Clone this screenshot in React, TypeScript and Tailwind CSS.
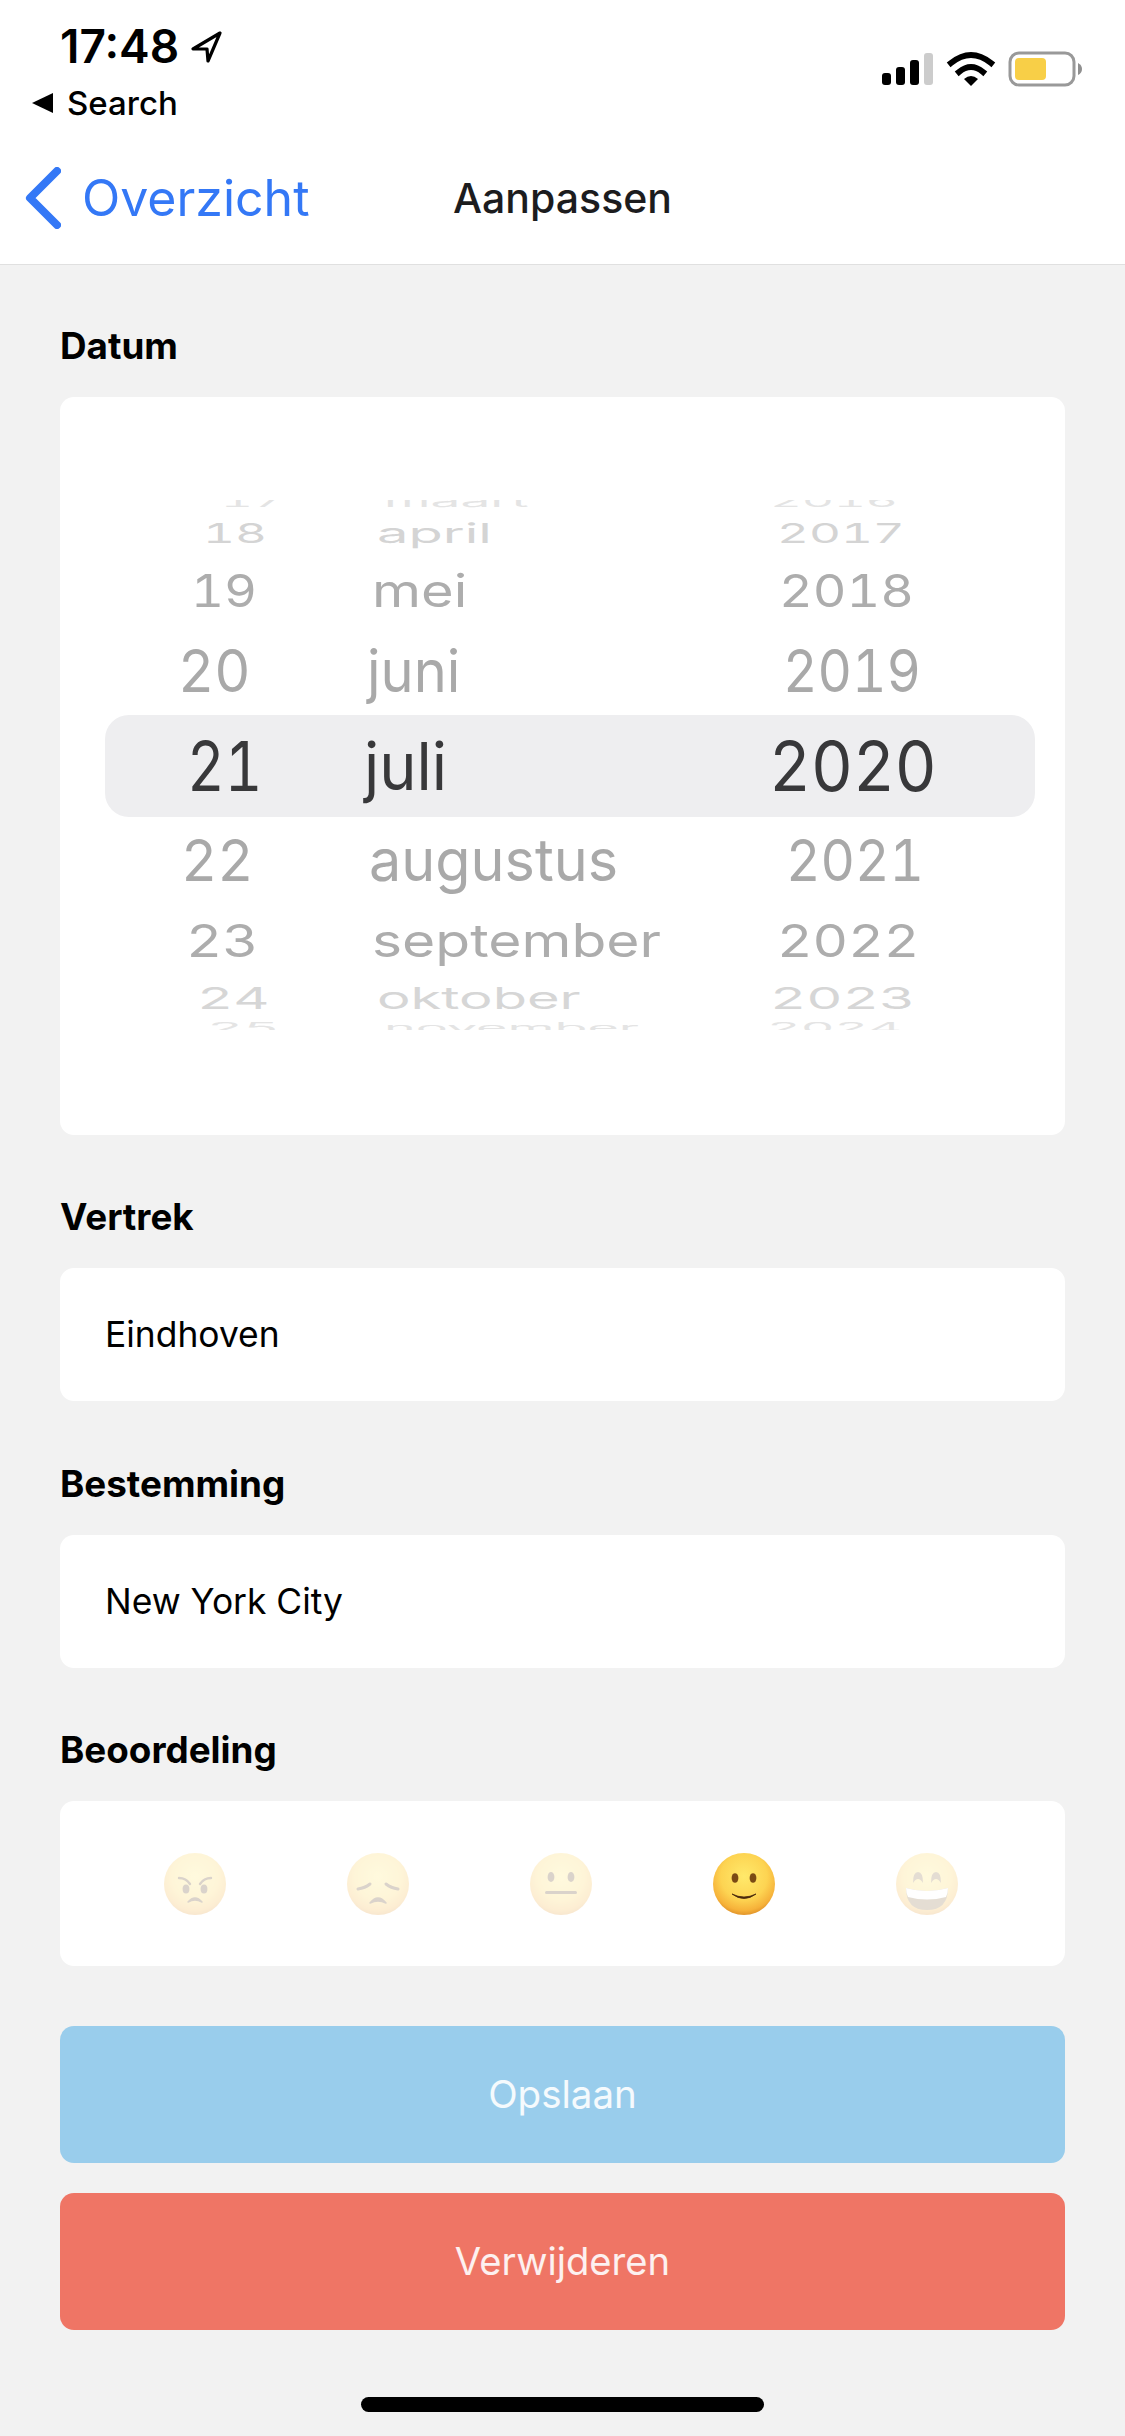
const pickerRows = [
  { day: '17', month: 'maart', year: '2016', row: 'h-[22px] -mt-[10px]', size: 'text-[56px]', monthSize: 'text-[56px]', tone: 'scale-y-[0.3] text-[#e4e4e4]', dayX: 'ml-[116px] scale-x-[0.88]', monthX: 'ml-[24px] scale-x-[0.95]', yearX: 'ml-[20px] scale-x-[0.88]' },
  { day: '18', month: 'april', year: '2017', row: 'h-[42px]', size: 'text-[56px]', monthSize: 'text-[56px]', tone: 'scale-y-[0.49] text-[#d4d4d4]', dayX: 'ml-[98px] scale-x-[0.88]', monthX: 'ml-[17px]', yearX: 'ml-[27px] scale-x-[0.88]' },
  { day: '19', month: 'mei', year: '2018', row: 'h-[73px]', size: 'text-[56px]', monthSize: 'text-[56px]', tone: 'scale-y-[0.81] text-[#adadad]', dayX: 'ml-[86px] scale-x-[0.91]', monthX: 'ml-[12px]', yearX: 'ml-[29px] scale-x-[0.93]' },
  { day: '20', month: 'juni', year: '2019', row: 'h-[88px]', size: 'text-[56px]', monthSize: 'text-[56px]', tone: 'scale-y-[1.05] text-[#a9a9a9]', dayX: 'ml-[73px]', monthX: 'ml-[7px]', yearX: 'ml-[33px] scale-x-[0.95]' },
  { day: '21', month: 'juli', year: '2020', row: 'h-[102px] bg-[#eeeef0] rounded-[24px]', size: 'text-[66px]', monthSize: 'text-[63px]', tone: 'scale-y-[1.04] text-[#38383a]', dayX: 'ml-[82px] scale-x-[0.88]', monthX: 'ml-[4px]', yearX: 'ml-[19px] scale-x-[0.98]' },
  { day: '22', month: 'augustus', year: '2021', row: 'h-[85px]', size: 'text-[56px]', monthSize: 'text-[57.5px]', tone: 'scale-y-[1.03] text-[#a9a9a9]', dayX: 'ml-[76px]', monthX: 'ml-[9px]', yearX: 'ml-[36px] scale-x-[0.95]' },
  { day: '23', month: 'september', year: '2022', row: 'h-[77px]', size: 'text-[56px]', monthSize: 'text-[57px]', tone: 'scale-y-[0.81] text-[#adadad]', dayX: 'ml-[81px]', monthX: 'ml-[12px]', yearX: 'ml-[27px] scale-x-[0.98]' },
  { day: '24', month: 'oktober', year: '2023', row: 'h-[38px]', size: 'text-[56px]', monthSize: 'text-[56px]', tone: 'scale-y-[0.54] text-[#d6d6d6]', dayX: 'ml-[92px]', monthX: 'ml-[17px]', yearX: 'ml-[20px]' },
  { day: '25', month: 'november', year: '2024', row: 'h-[22px]', size: 'text-[56px]', monthSize: 'text-[56px]', tone: 'scale-y-[0.25] text-[#e4e4e4]', dayX: 'ml-[102px]', monthX: 'ml-[24px] scale-x-[0.96]', yearX: 'ml-[17px] scale-x-[0.93]' },
];

const StatusIcons = () => (
  <svg width="205" height="40" viewBox="880 50 205 40" className="mt-[50px] mr-[40px] shrink-0">
    <rect x="882" y="73" width="9" height="12" rx="3" fill="#000" />
    <rect x="896" y="67" width="9" height="18" rx="3" fill="#000" />
    <rect x="910" y="60" width="9" height="25" rx="3" fill="#000" />
    <rect x="924" y="53" width="9" height="32" rx="3" fill="#ccc" />
    <path d="M951 63 Q971 47 991 63" fill="none" stroke="#000" strokeWidth="6" strokeLinecap="square" />
    <path d="M959 72 Q971 62 983 72" fill="none" stroke="#000" strokeWidth="6" strokeLinecap="square" />
    <path d="M964 79 Q971 73 978 79 L971 86 Z" fill="#000" />
    <rect x="1010" y="53" width="64" height="32" rx="9" fill="none" stroke="#999" strokeWidth="3" />
    <rect x="1015" y="58" width="31" height="22" rx="4" fill="#f8cf47" />
    <path d="M1078 63 Q1082 65 1082 69 Q1082 73 1078 75 Z" fill="#8f8f8f" />
  </svg>
);

type Mood = 'angry' | 'sad' | 'neutral' | 'smile' | 'grin';

const Face = ({ mood, active }: { mood: Mood; active?: boolean }) => {
  const ink = '#5b3a17';
  return (
    <svg width="62" height="62" viewBox="0 0 62 62" className={active ? 'shrink-0' : 'shrink-0 opacity-[0.22]'}>
      <defs>
        <radialGradient id={`face-${mood}`} cx="50%" cy="38%" r="62%">
          <stop offset="0%" stopColor="#ffe96b" />
          <stop offset="60%" stopColor="#fdd452" />
          <stop offset="88%" stopColor="#f6b23a" />
          <stop offset="100%" stopColor="#e2952a" />
        </radialGradient>
      </defs>
      <circle cx="31" cy="31" r="31" fill={`url(#face-${mood})`} />
      {mood === 'angry' && (
        <>
          <ellipse cx="22" cy="36" rx="3.4" ry="4.6" fill={ink} />
          <ellipse cx="40" cy="36" rx="3.4" ry="4.6" fill={ink} />
          <path d="M15 25 Q22 25 26 31 M47 25 Q40 25 36 31" fill="none" stroke={ink} strokeWidth="2.4" strokeLinecap="round" />
          <path d="M24 49 Q31 41 38 49 Q31 45 24 49 Z" fill={ink} stroke={ink} strokeWidth="1.5" strokeLinejoin="round" />
        </>
      )}
      {mood === 'sad' && (
        <>
          <path d="M11 36 Q18 35 23 31 M51 36 Q44 35 39 31" fill="none" stroke={ink} strokeWidth="3" strokeLinecap="round" />
          <path d="M23 50 Q31 40 39 50 Q31 46 23 50 Z" fill={ink} stroke={ink} strokeWidth="1.5" strokeLinejoin="round" />
        </>
      )}
      {mood === 'neutral' && (
        <>
          <ellipse cx="21" cy="24" rx="3.4" ry="5" fill={ink} />
          <ellipse cx="41" cy="24" rx="3.4" ry="5" fill={ink} />
          <rect x="15" y="38" width="32" height="3" rx="1.5" fill={ink} />
        </>
      )}
      {mood === 'smile' && (
        <>
          <ellipse cx="22" cy="25" rx="3.4" ry="4.8" fill="#7a4a14" />
          <ellipse cx="40" cy="25" rx="3.4" ry="4.8" fill="#7a4a14" />
          <path d="M19 41 Q31 47 43 41 Q31 50 19 41 Z" fill="#4a2a0c" stroke="#4a2a0c" strokeWidth="0.8" strokeLinejoin="round" />
        </>
      )}
      {mood === 'grin' && (
        <>
          <path d="M17 30 Q17 19 22 19 Q27 19 27 30 Q22 22 17 30 Z" fill="#8a6a3a" />
          <path d="M35 30 Q35 19 40 19 Q45 19 45 30 Q40 22 35 30 Z" fill="#8a6a3a" />
          <path d="M10 35 Q31 41 52 35 Q52 57 31 57 Q10 57 10 35 Z" fill="#8a6a3a" />
          <path d="M10 35 Q31 41 52 35 Q52 40 50 44 Q31 49 12 44 Q10 40 10 35 Z" fill="#fff" />
        </>
      )}
    </svg>
  );
};

const Label = ({ children, className }: { children: string; className: string }) => (
  <div className={`h-[40px] mb-[31px] text-[36.8px] leading-[40px] font-bold text-black ${className}`}>{children}</div>
);

const TextCard = ({ value }: { value: string }) => (
  <div className="h-[133px] bg-white rounded-[14px] pl-[45px] flex items-center text-[35.4px] text-black">{value}</div>
);

export default function App() {
  return (
    <div className="w-[1125px] h-[2436px] bg-[#f2f2f2] flex flex-col font-[Inter,sans-serif] overflow-hidden">
      <header className="h-[265px] shrink-0 bg-white border-b border-[#e0e0e0] flex flex-col">
        <div className="h-[140px] flex justify-between">
          <div className="flex flex-col">
            <div className="pl-[60px] pt-[20px] h-[82px] flex items-start gap-[11px]">
              <span className="text-[46px] leading-[52px] font-semibold text-black">17:48</span>
              <svg width="34" height="34" viewBox="0 0 34 34" className="mt-[10px]">
                <path d="M30 3 L3 19 L17 19 L18 31 Z" fill="none" stroke="#000" strokeWidth="3.2" strokeLinejoin="round" />
              </svg>
            </div>
            <div className="pl-[32px] h-[42px] flex items-center gap-[14px]">
              <svg width="21" height="20" viewBox="0 0 21 20">
                <path d="M21 0 V20 L0 10 Z" fill="#000" />
              </svg>
              <span className="text-[33px] leading-[40px] font-medium text-black">Search</span>
            </div>
          </div>
          <StatusIcons />
        </div>
        <div className="h-[116px] grid grid-cols-[1fr_auto_1fr] items-center">
          <div className="pl-[25px] flex items-center gap-[21px]">
            <svg width="36" height="62" viewBox="0 0 36 62">
              <path d="M32 4 L5 31 L32 58" fill="none" stroke="#3478f6" strokeWidth="8" strokeLinecap="round" strokeLinejoin="round" />
            </svg>
            <span className="text-[50px] leading-[60px] text-[#3478f6]">Overzicht</span>
          </div>
          <div className="text-[41px] leading-[50px] font-[550] text-[#1c1c1e]">Aanpassen</div>
          <div />
        </div>
      </header>

      <main className="px-[60px] pt-[61px] flex flex-col">
        <Label className="">Datum</Label>
        <div className="h-[738px] bg-white rounded-[14px] pt-[103px]">
          <div className="h-[530px] overflow-hidden pl-[45px] pr-[30px]">
            {pickerRows.map(r => (
              <div key={r.day} className={`grid grid-cols-[255px_390px_1fr] grid-rows-[minmax(0,1fr)] items-center ${r.row}`}>
                <span className={`block w-fit origin-left leading-none tabular-nums ${r.size} ${r.tone} ${r.dayX}`}>{r.day}</span>
                <span className={`block w-fit origin-left leading-none ${r.monthSize} ${r.tone} ${r.monthX}`}>{r.month}</span>
                <span className={`block w-fit origin-left leading-none tabular-nums ${r.size} ${r.tone} ${r.yearX}`}>{r.year}</span>
              </div>
            ))}
          </div>
        </div>

        <Label className="mt-[62px]">Vertrek</Label>
        <TextCard value="Eindhoven" />

        <Label className="mt-[63px]">Bestemming</Label>
        <TextCard value="New York City" />

        <Label className="mt-[62px]">Beoordeling</Label>
        <div className="h-[165px] bg-white rounded-[14px] pl-[104px] flex items-center gap-[121px]">
          <Face mood="angry" />
          <Face mood="sad" />
          <Face mood="neutral" />
          <Face mood="smile" active />
          <Face mood="grin" />
        </div>

        <button className="mt-[60px] h-[137px] rounded-[14px] bg-[#99cdec] text-[38.5px] text-white/90">Opslaan</button>
        <button className="mt-[30px] h-[137px] rounded-[14px] bg-[#ef7565] text-[38.2px] text-white/90">Verwijderen</button>

        <div className="mt-[67px] self-center w-[403px] h-[15px] rounded-full bg-black" />
      </main>
    </div>
  );
}
